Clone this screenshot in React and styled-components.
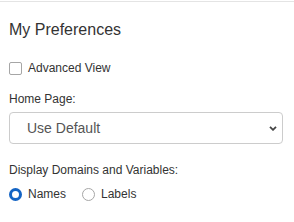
import styled, { createGlobalStyle } from "styled-components";

const GlobalStyle = createGlobalStyle`
  html, body {
    margin: 0;
    padding: 0;
    background: #fff;
  }
  body {
    font-family: "Liberation Sans", Arial, sans-serif;
    color: #333;
  }
`;

export default function App() {
  return (
    <>
      <GlobalStyle />
      <Page>
        <Panel>
          <Title>My Preferences</Title>
          <CheckRow>
            <Check type="checkbox" />
            <span>Advanced View</span>
          </CheckRow>
          <FieldLabel $top={14}>Home Page:</FieldLabel>
          <SelectWrap>
            <Select defaultValue="default">
              <option value="default">Use Default</option>
            </Select>
            <Chevron width="8" height="5" viewBox="0 0 8 5">
              <polyline
                points="1,0.8 4,3.8 7,0.8"
                fill="none"
                stroke="#444"
                strokeWidth="1.8"
              />
            </Chevron>
          </SelectWrap>
          <FieldLabel $top={18}>Display Domains and Variables:</FieldLabel>
          <RadioRow>
            <RadioOption>
              <Radio type="radio" name="display" defaultChecked />
              <span>Names</span>
            </RadioOption>
            <RadioOption>
              <Radio type="radio" name="display" />
              <span>Labels</span>
            </RadioOption>
          </RadioRow>
        </Panel>
      </Page>
    </>
  );
}

const Page = styled.div`
  padding-top: 1px;
  width: 294px;
  height: 221px;
`;

const Panel = styled.div`
  border-top: 1px solid #e4e4e4;
  padding: 0 11px 0 9px;
  display: flex;
  flex-direction: column;
`;

const Title = styled.h2`
  margin: 19px 0 0;
  font-size: 16px;
  font-weight: normal;
  line-height: 17px;
  color: #333;
`;

const CheckRow = styled.label`
  margin-top: 22px;
  display: flex;
  align-items: center;
  gap: 6px;
  font-size: 12px;
  line-height: 17px;
`;

const Check = styled.input`
  appearance: none;
  margin: 0;
  width: 13px;
  height: 13px;
  box-sizing: border-box;
  border: 1px solid #a6a6a6;
  border-radius: 2px;
  background: #fff;
`;

const FieldLabel = styled.div`
  margin-top: ${(p) => p.$top}px;
  font-size: 12px;
  line-height: 17px;
`;

const SelectWrap = styled.div`
  position: relative;
  margin-top: 4px;
`;

const Select = styled.select`
  appearance: none;
  width: 100%;
  height: 32px;
  box-sizing: border-box;
  border: 1px solid #ccc;
  border-radius: 4px;
  background: #fff;
  padding: 0 24px 0 17px;
  font-family: "Liberation Sans", Arial, sans-serif;
  font-size: 14px;
  color: #555;
  outline: none;
`;

const Chevron = styled.svg`
  position: absolute;
  right: 6px;
  top: 14px;
  pointer-events: none;
`;

const RadioRow = styled.div`
  margin-top: 7px;
  display: flex;
  gap: 16px;
  font-size: 12px;
  line-height: 17px;
`;

const RadioOption = styled.label`
  display: flex;
  align-items: center;
  gap: 6px;
`;

const Radio = styled.input`
  appearance: none;
  margin: 0;
  width: 13px;
  height: 13px;
  box-sizing: border-box;
  border: 1px solid #a6a6a6;
  border-radius: 50%;
  background: #fff;

  &:checked {
    border: 3.5px solid #1464c4;
  }
`;
